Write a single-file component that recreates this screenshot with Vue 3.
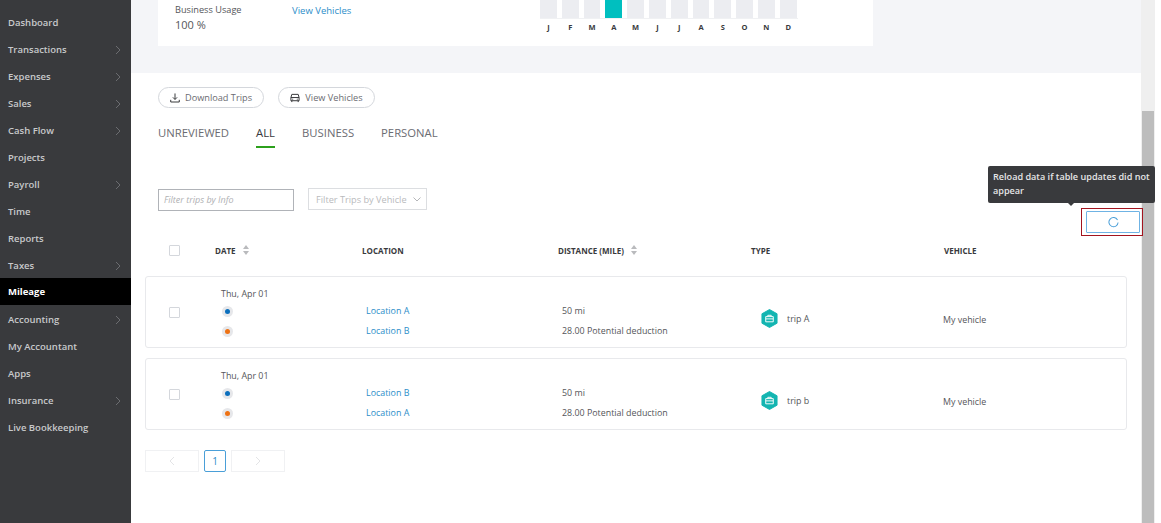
<template>
  <div class="page">
    <aside class="sidebar">
      <div
        v-for="item in navItems"
        :key="item.label"
        class="nav-item"
        :class="{ active: item.label === 'Mileage' }"
      >
        <span>{{ item.label }}</span>
        <svg v-if="item.arrow" class="nav-arrow" width="6" height="10" viewBox="0 0 6 10">
          <path d="M1 1l4 4-4 4" fill="none" stroke="#6b6c70" stroke-width="1" />
        </svg>
      </div>
    </aside>

    <main class="content">
      <section class="summary">
        <div class="summary-card">
          <div class="usage">
            <div class="usage-label">Business Usage</div>
            <div class="usage-value">100 %</div>
          </div>
          <a class="vehicles-link">View Vehicles</a>
          <div class="chart">
            <div class="bars">
              <div
                v-for="(m, i) in months"
                :key="i"
                class="bar"
                :class="{ current: i === 3 }"
              ></div>
            </div>
            <div class="month-labels">
              <span v-for="(m, i) in months" :key="i">{{ m }}</span>
            </div>
          </div>
        </div>
      </section>

      <section class="trips">
        <div class="actions">
          <button class="pill">
            <svg width="10" height="10" viewBox="0 0 11 11" fill="none" stroke="#393a3d" stroke-width="1.1">
              <path d="M5.5 0.5v6.5M3.2 4.8l2.3 2.3 2.3-2.3M0.8 7.5v2.4h9.4V7.5" />
            </svg>
            Download Trips
          </button>
          <button class="pill vehicles-pill">
            <svg width="10" height="10" viewBox="0 0 11 11" fill="none" stroke="#393a3d" stroke-width="1.1">
              <path d="M1 5l1-3.5h7L10 5zM1 5v3.5h9V5M2 8.5v1.5M9 8.5v1.5M2.5 6.8h1M7.5 6.8h1" />
            </svg>
            View Vehicles
          </button>
        </div>

        <nav class="tabs">
          <span
            v-for="tab in tabs"
            :key="tab"
            class="tab"
            :class="{ selected: tab === 'ALL' }"
          >{{ tab }}</span>
        </nav>

        <div class="filters">
          <div class="filter-input">Filter trips by Info</div>
          <div class="filter-select">
            <span>Filter Trips by Vehicle</span>
            <svg width="8" height="5" viewBox="0 0 8 5">
              <path d="M0.5 0.5L4 4l3.5-3.5" fill="none" stroke="#b5b6b9" stroke-width="1" />
            </svg>
          </div>
          <div class="reload">
            <div class="tooltip">Reload data if table updates did not appear</div>
            <button class="reload-btn">
              <svg width="11" height="11" viewBox="0 0 12 12">
                <path d="M10.4 3.2A5 5 0 1 0 11 6" fill="none" stroke="#4a9fd8" stroke-width="1.1" />
              </svg>
            </button>
          </div>
        </div>

        <div class="table-head row-grid">
          <div class="check-cell"><span class="checkbox"></span></div>
          <div class="th">
            DATE
            <svg width="6" height="10" viewBox="0 0 6 10"><path d="M3 0l3 4H0zM3 10l3-4H0z" fill="#b9babd" /></svg>
          </div>
          <div class="th">LOCATION</div>
          <div class="th">
            DISTANCE (MILE)
            <svg width="6" height="10" viewBox="0 0 6 10"><path d="M3 0l3 4H0zM3 10l3-4H0z" fill="#b9babd" /></svg>
          </div>
          <div class="th">TYPE</div>
          <div class="th">VEHICLE</div>
        </div>

        <div v-for="trip in rows" :key="trip.name" class="trip-card row-grid">
          <div class="check-cell"><span class="checkbox"></span></div>
          <div class="date-cell">
            <div class="date">{{ trip.date }}</div>
            <div class="dot-wrap"><span class="dot from"></span></div>
            <div class="dot-wrap"><span class="dot to"></span></div>
          </div>
          <div class="location-cell">
            <a>{{ trip.from }}</a>
            <a>{{ trip.to }}</a>
          </div>
          <div class="distance-cell">
            <div>50 mi</div>
            <div>28.00 Potential deduction</div>
          </div>
          <div class="type-cell">
            <svg width="17" height="19" viewBox="0 0 18 20">
              <path d="M9 0.5l8 4.5v10l-8 4.5-8-4.5V5z" fill="#13b5b1" stroke="#13b5b1" stroke-linejoin="round" />
              <path d="M5 8h8v5.5H5zM7.2 8V6.6h3.6V8M5 10.4h8" fill="none" stroke="#fff" stroke-width="1" />
            </svg>
            <span>{{ trip.name }}</span>
          </div>
          <div class="vehicle-cell">My vehicle</div>
        </div>

        <div class="pager">
          <div class="pager-btn">
            <svg width="6" height="10" viewBox="0 0 6 10">
              <path d="M5 1L1 5l4 4" fill="none" stroke="#e3e4e6" stroke-width="1" />
            </svg>
          </div>
          <div class="pager-num">1</div>
          <div class="pager-btn">
            <svg width="6" height="10" viewBox="0 0 6 10">
              <path d="M1 1l4 4-4 4" fill="none" stroke="#e3e4e6" stroke-width="1" />
            </svg>
          </div>
        </div>
      </section>
    </main>

    <div class="scrollbar"><div class="thumb"></div></div>
  </div>
</template>

<script setup>
const navItems = [
  { label: 'Dashboard' },
  { label: 'Transactions', arrow: true },
  { label: 'Expenses', arrow: true },
  { label: 'Sales', arrow: true },
  { label: 'Cash Flow', arrow: true },
  { label: 'Projects' },
  { label: 'Payroll', arrow: true },
  { label: 'Time' },
  { label: 'Reports' },
  { label: 'Taxes', arrow: true },
  { label: 'Mileage' },
  { label: 'Accounting', arrow: true },
  { label: 'My Accountant' },
  { label: 'Apps' },
  { label: 'Insurance', arrow: true },
  { label: 'Live Bookkeeping' },
];

const months = ['J', 'F', 'M', 'A', 'M', 'J', 'J', 'A', 'S', 'O', 'N', 'D'];
const tabs = ['UNREVIEWED', 'ALL', 'BUSINESS', 'PERSONAL'];

const rows = [
  { name: 'trip A', date: 'Thu, Apr 01', from: 'Location A', to: 'Location B' },
  { name: 'trip b', date: 'Thu, Apr 01', from: 'Location B', to: 'Location A' },
];
</script>

<style>
html, body {
  margin: 0;
  background: #fff;
  overflow: hidden;
}
</style>

<style scoped>
.page {
  display: flex;
  width: 1161px;
  height: 523px;
  overflow: hidden;
  font-family: "Open Sans", "Liberation Sans", sans-serif;
  color: #393a3d;
  background: #fff;
}

.sidebar {
  flex: none;
  width: 131px;
  box-sizing: border-box;
  padding-top: 9px;
  background: #393a3d;
}

.nav-item {
  display: flex;
  align-items: center;
  justify-content: space-between;
  height: 27px;
  padding: 0 10px 0 8px;
  font-size: 9.5px;
  font-weight: 600;
  color: #c8c9cb;
}

.nav-item.active {
  margin: -1px 0 1px;
  background: #000;
  color: #fff;
  font-weight: 700;
}

.content {
  flex: none;
  width: 1010px;
  display: flex;
  flex-direction: column;
}

.summary {
  height: 73px;
  box-sizing: border-box;
  padding-left: 27px;
  background: #f4f5f8;
}

.summary-card {
  display: flex;
  width: 715px;
  height: 46px;
  box-sizing: border-box;
  padding-left: 17px;
  background: #fff;
  font-size: 9.5px;
}

.usage {
  width: 117px;
  padding-top: 3px;
  color: #55565a;
}

.usage-label {
  font-size: 9.2px;
  line-height: 14px;
}

.usage-value {
  font-size: 11px;
  line-height: 16px;
}

.vehicles-link {
  width: 248px;
  padding-top: 3px;
  line-height: 15px;
  color: #2c8ec9;
}

.chart {
  width: 260px;
}

.bars {
  display: flex;
  gap: 5px;
  height: 18px;
  width: 258px;
  border-bottom: 1px solid #f0f1f3;
}

.bar {
  width: 16.8px;
  background: #ecedf1;
}

.bar.current {
  background: #00bfbf;
}

.month-labels {
  display: flex;
  gap: 5px;
  font-size: 7.5px;
  font-weight: 700;
  line-height: 16px;
}

.month-labels span {
  width: 16.8px;
  text-align: center;
}

.trips {
  padding-left: 14px;
}

.actions {
  display: flex;
  gap: 14px;
  padding: 14px 0 0 13px;
}

.pill {
  display: flex;
  align-items: center;
  justify-content: center;
  gap: 5px;
  box-sizing: border-box;
  width: 106px;
  height: 21px;
  padding: 0;
  border: 1px solid #d4d7dc;
  border-radius: 11px;
  background: #fff;
  font: inherit;
  font-size: 9.2px;
  color: #6b6c72;
}

.vehicles-pill {
  width: 97px;
}

.tabs {
  display: flex;
  gap: 27px;
  padding: 13px 0 0 13px;
}

.tab {
  box-sizing: border-box;
  height: 27px;
  font-size: 11.3px;
  line-height: 24px;
  color: #6b6c72;
}

.tab.selected {
  color: #393a3d;
  border-bottom: 2px solid #2ca01c;
}

.filters {
  display: flex;
  align-items: flex-start;
  box-sizing: border-box;
  height: 83px;
  padding: 41px 1px 0 13px;
}

.filter-input {
  box-sizing: border-box;
  width: 136px;
  height: 22px;
  padding-left: 5px;
  border: 1px solid #b0b3b8;
  font-size: 9px;
  font-style: italic;
  line-height: 20px;
  color: #b0b1b4;
}

.filter-select {
  display: flex;
  align-items: center;
  justify-content: space-between;
  box-sizing: border-box;
  width: 119px;
  height: 22px;
  margin: -1px 0 0 14px;
  padding: 0 5px 0 7px;
  border: 1px solid #dcdee1;
  font-size: 9.2px;
  color: #b9babd;
}

.reload {
  position: relative;
  z-index: 2;
  margin: 22px 0 0 auto;
}

.tooltip {
  position: absolute;
  left: -98px;
  bottom: 30px;
  box-sizing: border-box;
  width: 167px;
  height: 37px;
  padding: 4px 3px 4px 5px;
  border-radius: 2px;
  background: #393a3d;
  font-size: 9.1px;
  font-weight: 600;
  line-height: 14px;
  color: #e6e6e7;
}

.tooltip::after {
  content: "";
  position: absolute;
  left: 80px;
  bottom: -3px;
  border: 3px solid transparent;
  border-top-color: #393a3d;
  border-bottom: 0;
}

.reload-btn {
  position: relative;
  display: flex;
  align-items: center;
  justify-content: center;
  box-sizing: border-box;
  width: 54px;
  height: 22px;
  padding: 0;
  border: 1px solid #6fb3e4;
  border-radius: 1px;
  background: #fff;
}

.reload-btn::after {
  content: "";
  position: absolute;
  inset: -4px -4px -4px -6px;
  border: 1px solid #a3141f;
}

.table-head {
  height: 38px;
  align-items: center;
}

.row-grid {
  display: grid;
  grid-template-columns: 70px 147px 196px 193px 193px 183px;
  width: 982px;
}

.check-cell {
  display: flex;
  padding-left: 24px;
}

.trip-card .check-cell {
  padding-left: 23px;
}

.checkbox {
  display: block;
  width: 9px;
  height: 9px;
  border: 1px solid #d4d7dc;
  border-radius: 1px;
}

.th {
  display: flex;
  align-items: center;
  gap: 7px;
  font-size: 8px;
  font-weight: 700;
}

.trip-card {
  box-sizing: border-box;
  height: 72px;
  margin-bottom: 10px;
  border: 1px solid #e8e9ec;
  border-radius: 3px;
  align-items: center;
  font-size: 8.9px;
  color: #55565a;
}

.table-head + .trip-card {
  margin-top: 7px;
}

.date-cell {
  align-self: start;
  padding: 10px 0 0 5px;
}

.date {
  line-height: 14px;
}

.dot-wrap {
  display: flex;
  align-items: center;
  justify-content: center;
  width: 11px;
  height: 11px;
  margin: 5px 0 9px 1px;
  border-radius: 50%;
  background: #e6e7ea;
}

.dot {
  width: 5px;
  height: 5px;
  border-radius: 50%;
}

.dot.from {
  background: #0b6fbd;
}

.dot.to {
  background: #ee7214;
}

.location-cell {
  display: flex;
  flex-direction: column;
  gap: 6px;
  padding: 18px 0 0 3px;
  line-height: 14px;
  color: #2c8ec9;
}

.distance-cell {
  display: flex;
  flex-direction: column;
  gap: 6px;
  padding: 18px 0 0 3px;
  line-height: 14px;
}

.type-cell {
  display: flex;
  align-items: center;
  gap: 9px;
  padding: 13px 0 0 9px;
}

.vehicle-cell {
  margin-left: -2px;
  padding-top: 14px;
}

.pager {
  display: flex;
  gap: 5px;
  margin-top: 20px;
}

.pager-btn {
  display: flex;
  align-items: center;
  justify-content: center;
  width: 52px;
  height: 20px;
  border: 1px solid #f0f1f3;
}

.pager-num {
  width: 20px;
  height: 20px;
  border: 1px solid #4a9fd8;
  border-radius: 2px;
  font-size: 10px;
  line-height: 20px;
  text-align: center;
  color: #2c8ec9;
}

.scrollbar {
  flex: none;
  display: flex;
  flex-direction: column;
  justify-content: flex-end;
  width: 14px;
  background: #efefef;
}

.thumb {
  height: 412px;
  margin: 0 1px;
  background: #bdbdbd;
}
</style>
